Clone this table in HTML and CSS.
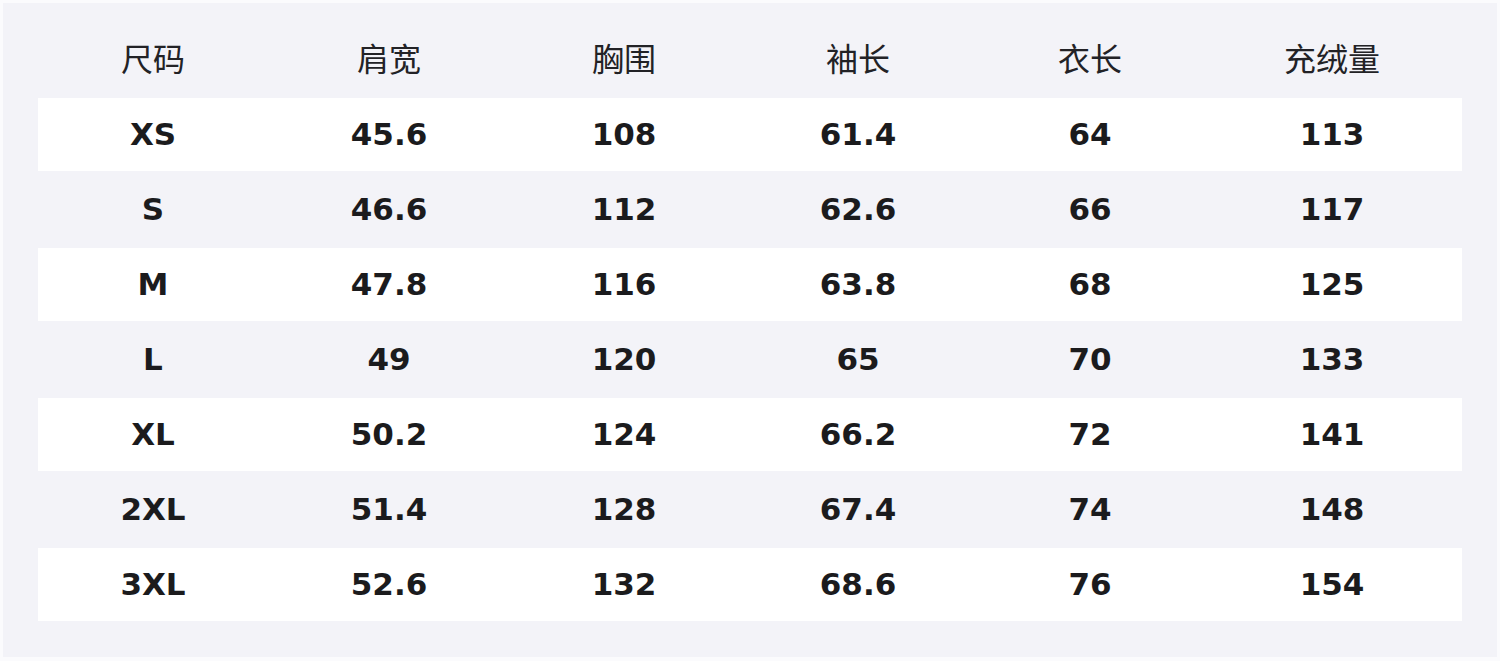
FILE: index.html
```html
<!DOCTYPE html>
<html lang="zh">
<head>
<meta charset="utf-8">
<link rel="stylesheet" href="styles.css">
</head>
<body>
<div class="frame">
  <div class="table">
    <div class="row head"><span>尺码</span><span>肩宽</span><span>胸围</span><span>袖长</span><span>衣长</span><span>充绒量</span></div>
    <div class="row white"><span>XS</span><span>45.6</span><span>108</span><span>61.4</span><span>64</span><span>113</span></div>
    <div class="row"><span>S</span><span>46.6</span><span>112</span><span>62.6</span><span>66</span><span>117</span></div>
    <div class="row white"><span>M</span><span>47.8</span><span>116</span><span>63.8</span><span>68</span><span>125</span></div>
    <div class="row"><span>L</span><span>49</span><span>120</span><span>65</span><span>70</span><span>133</span></div>
    <div class="row white"><span>XL</span><span>50.2</span><span>124</span><span>66.2</span><span>72</span><span>141</span></div>
    <div class="row"><span>2XL</span><span>51.4</span><span>128</span><span>67.4</span><span>74</span><span>148</span></div>
    <div class="row white"><span>3XL</span><span>52.6</span><span>132</span><span>68.6</span><span>76</span><span>154</span></div>
  </div>
</div>
</body>
</html>
```
FILE: styles.css
```css
html, body {
  margin: 0;
  padding: 0;
  background: #fbfbfd;
}
body {
  padding: 3px 3px 4px 3px;
  width: 1500px;
  height: 661px;
  box-sizing: border-box;
}
.frame {
  background: #f3f3f8;
  height: 654px;
  padding: 19px 35px 0 35px;
  box-sizing: border-box;
}
.table {
  display: flex;
  flex-direction: column;
}
.row {
  display: grid;
  grid-template-columns: 230px 242px 228px 240px 224px 260px;
  height: 73px;
  margin: 1px 0;
  padding-bottom: 2px;
  box-sizing: border-box;
  align-items: center;
  justify-items: center;
  font-family: "DejaVu Sans", "Noto Sans CJK SC", sans-serif;
  font-weight: bold;
  font-size: 31px;
  color: #1b1b1d;
}
.row.white {
  background: #ffffff;
}
.row.head {
  font-family: "Noto Sans CJK SC", sans-serif;
  font-weight: normal;
  font-size: 32px;
  color: #222226;
  padding-bottom: 5px;
}
```
